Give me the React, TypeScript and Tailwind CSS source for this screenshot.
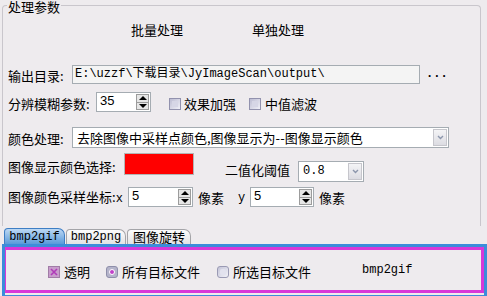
import React from "react";

const mono = "font-['Liberation_Mono','Noto_Sans_CJK_SC',monospace] text-[12px]";

function Spinner({ value, width }: { value: string; width: string }) {
  return (
    <div className={`flex h-[20px] ${width} border border-[#A5ACB2] bg-white`}>
      <span className="flex-1 pl-[3px] font-['Liberation_Sans',sans-serif] text-[13px] leading-[16px]">{value}</span>
      <div className="m-[1px] flex w-[13px] flex-col border border-[#9C9C9C] bg-[#E6E6E6]">
        <span className="flex flex-1 items-center justify-center border-b border-[#9C9C9C]">
          <span className="h-0 w-0 border-x-[4px] border-b-[4px] border-x-transparent border-b-black" />
        </span>
        <span className="flex flex-1 items-center justify-center">
          <span className="h-0 w-0 border-x-[4px] border-t-[4px] border-x-transparent border-t-black" />
        </span>
      </div>
    </div>
  );
}

function Combo({ text, width, textClass }: { text: string; width: string; textClass: string }) {
  return (
    <div className={`flex h-[21px] ${width} items-stretch border border-[#A5ACB2] bg-white`}>
      <span className={`flex-1 truncate pl-[4px] leading-[19px] ${textClass}`}>{text}</span>
      <span className="m-[1px] flex w-[14px] items-center justify-center border border-[#C6C6CC] bg-[linear-gradient(#F4F4F6,#DCDCE2)]">
        <svg width="7" height="5" viewBox="0 0 7 5">
          <path d="M1 1 L3.5 3.5 L6 1" fill="none" stroke="#8C96AC" strokeWidth="1.4" />
        </svg>
      </span>
    </div>
  );
}

function Check() {
  return (
    <span className="flex h-[12px] w-[12px] items-center justify-center border border-[#9292AE] bg-[linear-gradient(135deg,#BCBCD2,#F0F0F8)]">
      <span className="h-[6px] w-[6px] bg-[#D6D6E6]" />
    </span>
  );
}

export default function App() {
  return (
    <div className="relative h-[296px] w-[487px] overflow-hidden bg-[#EEEBEE] font-['Noto_Sans_CJK_SC',sans-serif] text-[13px] leading-[16px] text-black">
      {/* group box */}
      <div className="relative ml-[2px] mt-[5px] h-[221px] w-[479px] rounded-t-[4px] border border-b-0 border-[#C9C6CC]">
        <span className="absolute left-[4px] top-[-6px] bg-[#EEEBEE] px-[1px] leading-[13px]">处理参数</span>

        <div className="mt-[16px] flex h-[16px]">
          <span className="ml-[128px]">批量处理</span>
          <span className="ml-[69px]">单独处理</span>
        </div>

        <div className="mt-[26px] flex h-[20px] items-center">
          <span className="ml-[5px] mt-[4px] w-[64px]">输出目录:</span>
          <div className={`h-[19px] w-[348px] border border-[#A5ACB2] bg-[#F4F4F4] pl-[2px] leading-[17px] ${mono}`}>
            E:\uzzf\下载目录\JyImageScan\output\
          </div>
          <span className={`ml-[6px] font-bold ${mono}`}>...</span>
        </div>

        <div className="mt-[8px] flex h-[20px] items-center">
          <span className="ml-[5px] mt-[4px] w-[88px]">分辨模糊参数:</span>
          <Spinner value="35" width="w-[55px]" />
          <span className="ml-[18px] mt-[3px] flex items-center gap-[3px]">
            <Check />
            效果加强
          </span>
          <span className="ml-[13px] mt-[3px] flex items-center gap-[4px]">
            <Check />
            中值滤波
          </span>
        </div>

        <div className="mt-[15px] flex h-[21px] items-center">
          <span className="ml-[5px] mt-[2px] w-[64px]">颜色处理:</span>
          <Combo text="去除图像中采样点颜色,图像显示为--图像显示颜色" width="w-[377px]" textClass="text-[13px]" />
        </div>

        <div className="mt-[5px] flex h-[29px] items-start">
          <span className="ml-[5px] mt-[6px] w-[116px]">图像显示颜色选择:</span>
          <span className="h-[22px] w-[70px] border border-[#B4B4B4] bg-[#FF0000]" />
          <span className="ml-[31px] mt-[9px]">二值化阈值</span>
          <div className="ml-[8px] mt-[8px]">
            <Combo text="0.8" width="w-[66px]" textClass={mono} />
          </div>
        </div>

        <div className="mt-[5px] flex h-[20px] items-center">
          <span className="ml-[5px] mt-[2px] w-[120px]">
            图像颜色采样坐标:<span className={mono}>x</span>
          </span>
          <Spinner value="5" width="w-[65px]" />
          <span className="ml-[5px] mt-[2px]">像素</span>
          <span className={`ml-[14px] mt-[2px] w-[12px] ${mono}`}>y</span>
          <Spinner value="5" width="w-[64px]" />
          <span className="ml-[5px] mt-[2px]">像素</span>
        </div>
      </div>

      {/* tabs */}
      <div className="flex h-[18px] items-end pl-[4px]">
        <span className={`flex h-[16px] w-[61px] items-center justify-center rounded-tl-[4px] rounded-tr-[7px] border border-b-0 border-[#3E7EC4] bg-[linear-gradient(#BCD8F4,#5A9ADA)] ${mono}`}>
          bmp2gif
        </span>
        <span className={`ml-[1px] flex h-[15px] w-[60px] items-center justify-center rounded-tl-[4px] rounded-tr-[7px] border border-b-0 border-[#A4A4A8] bg-[linear-gradient(#FCFCFC,#E2E2E4)] ${mono}`}>
          bmp2png
        </span>
        <span className="ml-[1px] flex h-[15px] w-[64px] items-center justify-center rounded-tl-[4px] rounded-tr-[7px] border border-b-0 border-[#A4A4A8] bg-[linear-gradient(#FCFCFC,#E2E2E4)] leading-[14px]">
          图像旋转
        </span>
      </div>

      {/* tab panel */}
      <div className="ml-[2px] h-[54px] w-[485px] border-[3px] border-[#3C8CDA]">
        <div className="flex h-[46px] items-center border-[3px] border-l-[1px] border-[#D838D8]">
          <span className="ml-[42px] mt-[3px] flex items-center gap-[4px]">
            <span className="flex h-[12px] w-[12px] items-center justify-center border border-[#A07CA6] bg-[#C89CCC]">
              <svg width="8" height="8" viewBox="0 0 8 8">
                <path d="M1 1 L7 7 M7 1 L1 7" stroke="#B03CB8" strokeWidth="1.6" />
              </svg>
            </span>
            透明
          </span>
          <span className="ml-[16px] mt-[3px] flex items-center gap-[4px]">
            <span className="flex h-[12px] w-[12px] items-center justify-center rounded-[3px] border border-[#8E8EAA] bg-[#B4B4CA]">
              <span className="h-[6px] w-[6px] rounded-full border border-white bg-[#C040C8]" />
            </span>
            所有目标文件
          </span>
          <span className="ml-[17px] mt-[3px] flex items-center gap-[4px]">
            <span className="flex h-[12px] w-[12px] items-center justify-center rounded-[3px] border border-[#9A9AB4] bg-[linear-gradient(135deg,#C4C4D8,#F2F2F8)]">
              <span className="h-[6px] w-[6px] rounded-[2px] bg-[#E2E2EE]" />
            </span>
            所选目标文件
          </span>
          <span className={`ml-[51px] ${mono}`}>bmp2gif</span>
        </div>
      </div>
    </div>
  );
}
